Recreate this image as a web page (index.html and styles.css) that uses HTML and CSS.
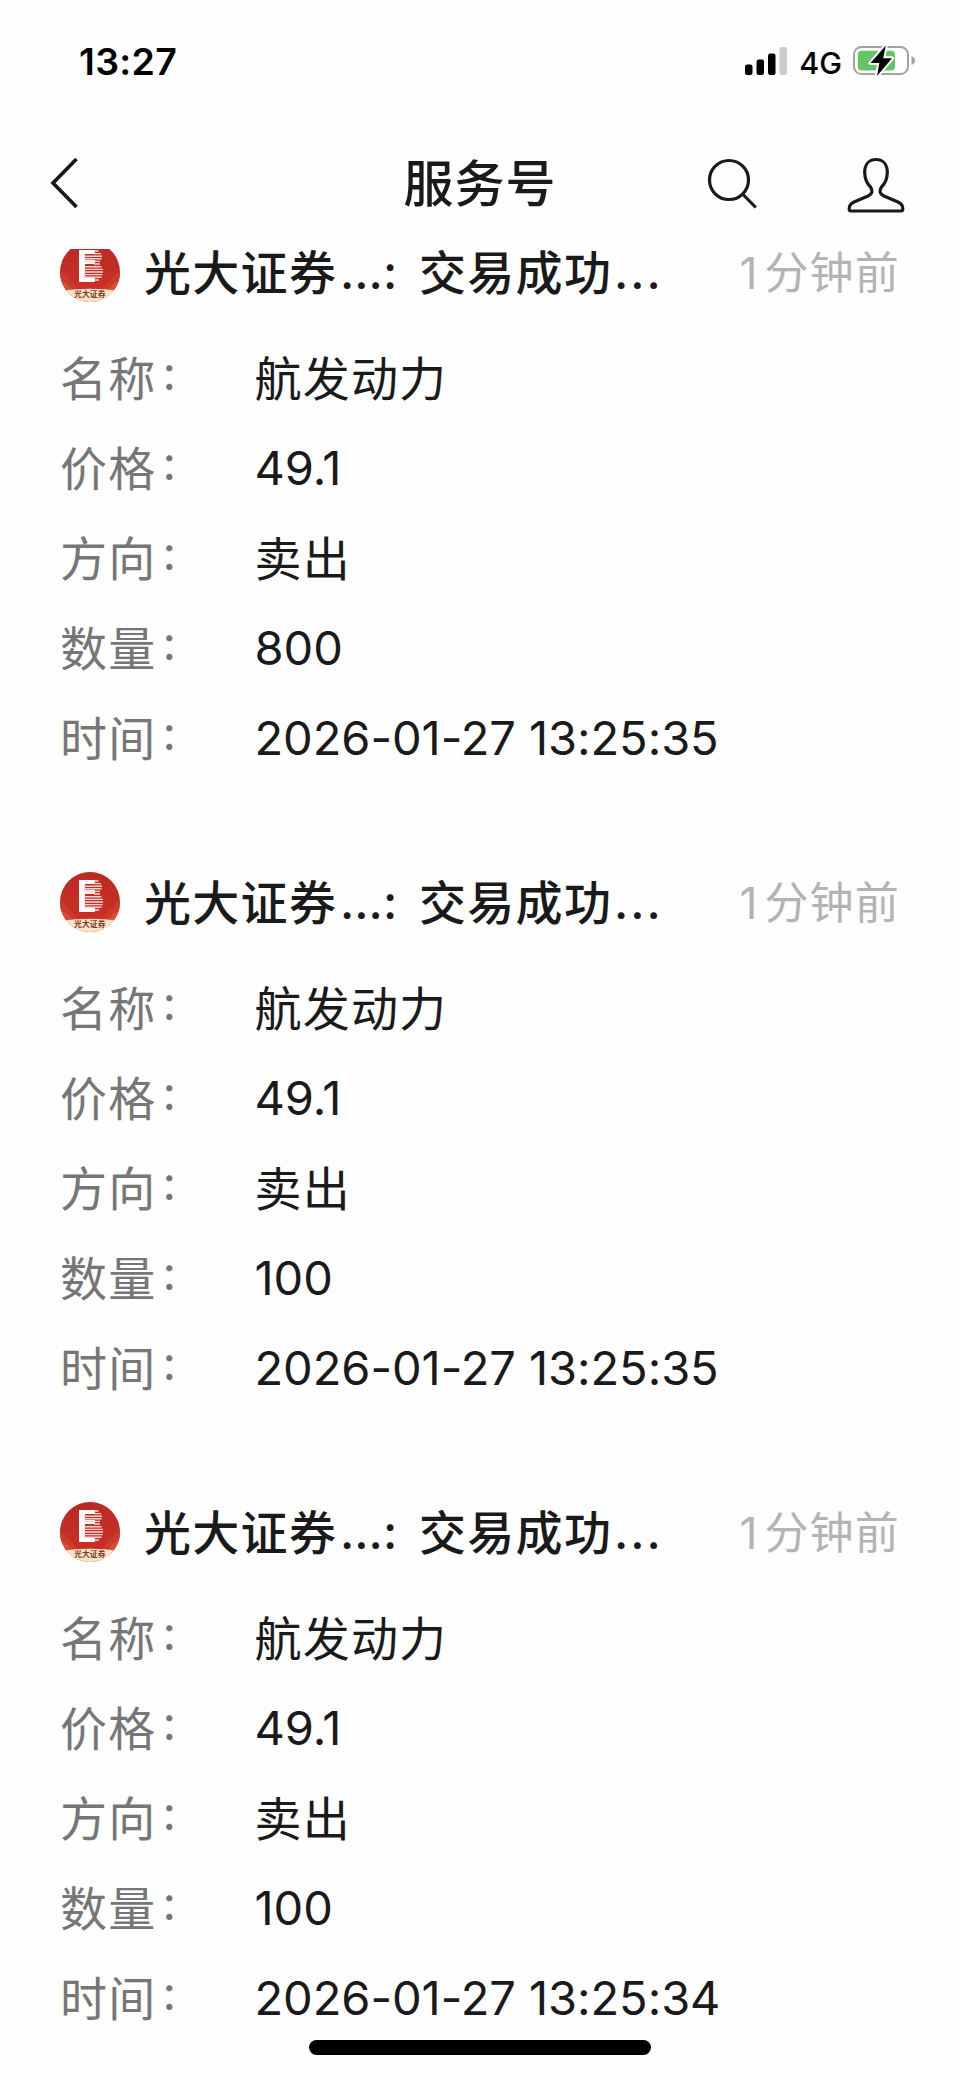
FILE: index.html
```html
<!DOCTYPE html>
<html lang="zh-CN">
<head>
<meta charset="utf-8">
<title>服务号</title>
<link rel="stylesheet" href="styles.css">
</head>
<body>
<svg class="defs" width="0" height="0" aria-hidden="true">
  <defs>
    <linearGradient id="red" x1="0" y1="0" x2="0" y2="1"><stop offset="0" stop-color="#b92a22"/><stop offset=".75" stop-color="#cb2f27"/></linearGradient>
    <clipPath id="disc"><circle cx="30" cy="30" r="30"/></clipPath>
    <symbol id="logo" viewBox="0 0 60 60">
      <g clip-path="url(#disc)">
        <rect width="60" height="60" fill="url(#red)"/>
        <path d="M0 29Q10 35 18 48H6L0 40ZM60 29Q50 35 42 48H54L60 40Z" fill="#cb3a2a"/>
        <path d="M0 38Q8 41 12 48H0ZM60 38Q52 41 48 48H60Z" fill="#d4502e"/>
        <path d="M0 49Q30 44.500 60 49V60H0Z" fill="#fae3c6"/>
        <path d="M19 8H35V12H25V18H35V22H25V35H35V40H19Z" fill="#fff"/>
        <path d="M34 9H38.500M34 11.600H41M24 14.200H42M24 16.800H41.500M24 19.400H40M34 22H40M24 24.800H41.500M24 27.400H43M24 30H43M24 32.600H42.500M24 35.200H41.500M34 38H39" fill="none" stroke="#f6d5d1" stroke-width="1.400"/>
      </g>
    </symbol>
  </defs>
</svg>
<div class="screen">
  <div class="status">
    <span class="clock">13:27</span>
    <div class="status-right">
      <svg width="42" height="30" viewBox="0 0 42 30"><rect x="0" y="18.500" width="7.500" height="10.500" rx="2.200"/><rect x="11.500" y="13.500" width="7.500" height="15.500" rx="2.200"/><rect x="23" y="7.500" width="7.500" height="21.500" rx="2.200"/><rect x="34.500" y="1" width="7.500" height="28" rx="2.200" fill="#ccc"/></svg>
      <span class="net">4G</span>
      <svg width="63" height="32" viewBox="0 0 63 32"><rect x="1" y="1.900" width="54" height="27.200" rx="7.500" fill="none" stroke="#a3a3a3" stroke-width="2"/><rect x="4.800" y="5.800" width="37.200" height="19.800" rx="4" fill="#65c466"/><path d="M58.500 11Q62 12.500 62 15.500T58.500 20Z" fill="#a3a3a3"/><path d="M32.800.5L17.500 18H26.300L24 31L39 13.200H30.200Z" stroke="#fff" stroke-width="4" stroke-linejoin="round"/><path d="M32.800.5L17.500 18H26.300L24 31L39 13.200H30.200Z"/></svg>
    </div>
  </div>
  <div class="nav">
    <svg class="back" width="30" height="54" viewBox="0 0 30 54"><path d="M27.500 3L4 27L27.500 51" fill="none" stroke="#1a1a1a" stroke-width="3.700"/></svg>
    <h1 class="nav-title">服务号</h1>
    <div class="nav-actions">
      <svg width="52" height="54" viewBox="0 0 52 54"><circle cx="22" cy="24" r="19.500" fill="none" stroke="#1a1a1a" stroke-width="3.200"/><path d="M35.500 38L48.800 51.500" stroke="#1a1a1a" stroke-width="3.200"/></svg>
      <svg width="60" height="58" viewBox="0 0 60 58"><path d="M30 3.500C22.500 3.500 18.700 9 18.700 16.500C18.700 23 20.500 27 24.500 31C27.200 35 26.200 38 22.500 39.800L7.500 46.300C4.300 47.800 3.200 50 3.200 53Q3.200 55 5 55H55Q56.800 55 56.800 53C56.800 50 55.700 47.800 52.500 46.300L37.500 39.800C33.800 38 32.800 35 35.500 31C39.500 27 41.300 23 41.300 16.500C41.300 9 37.500 3.500 30 3.500Z" fill="none" stroke="#1a1a1a" stroke-width="3.200"/></svg>
    </div>
  </div>
  <main class="feed">
    <article class="card">
      <header class="card-head"><span class="avatar"><svg width="60" height="60"><use href="#logo"/></svg><span class="avatar-text">光大证券</span></span><span class="name">光大证券</span><span class="dots">...</span><span class="sep">:</span><span class="subject">交易成功</span><span class="dots wide">...</span><time class="ago"><span class="num">1</span>分钟前</time></header>
      <dl class="rows">
        <dt>名称<i>:</i></dt><dd>航发动力</dd>
        <dt>价格<i>:</i></dt><dd class="num">49.1</dd>
        <dt>方向<i>:</i></dt><dd>卖出</dd>
        <dt>数量<i>:</i></dt><dd class="num">800</dd>
        <dt>时间<i>:</i></dt><dd class="num">2026-01-27 13:25:35</dd>
      </dl>
    </article>
    <article class="card">
      <header class="card-head"><span class="avatar"><svg width="60" height="60"><use href="#logo"/></svg><span class="avatar-text">光大证券</span></span><span class="name">光大证券</span><span class="dots">...</span><span class="sep">:</span><span class="subject">交易成功</span><span class="dots wide">...</span><time class="ago"><span class="num">1</span>分钟前</time></header>
      <dl class="rows">
        <dt>名称<i>:</i></dt><dd>航发动力</dd>
        <dt>价格<i>:</i></dt><dd class="num">49.1</dd>
        <dt>方向<i>:</i></dt><dd>卖出</dd>
        <dt>数量<i>:</i></dt><dd class="num">100</dd>
        <dt>时间<i>:</i></dt><dd class="num">2026-01-27 13:25:35</dd>
      </dl>
    </article>
    <article class="card">
      <header class="card-head"><span class="avatar"><svg width="60" height="60"><use href="#logo"/></svg><span class="avatar-text">光大证券</span></span><span class="name">光大证券</span><span class="dots">...</span><span class="sep">:</span><span class="subject">交易成功</span><span class="dots wide">...</span><time class="ago"><span class="num">1</span>分钟前</time></header>
      <dl class="rows">
        <dt>名称<i>:</i></dt><dd>航发动力</dd>
        <dt>价格<i>:</i></dt><dd class="num">49.1</dd>
        <dt>方向<i>:</i></dt><dd>卖出</dd>
        <dt>数量<i>:</i></dt><dd class="num">100</dd>
        <dt>时间<i>:</i></dt><dd class="num">2026-01-27 13:25:34</dd>
      </dl>
    </article>
  </main>
  <div class="home-indicator"></div>
</div>
</body>
</html>
```

FILE: styles.css
```css
* { box-sizing: border-box; }
body { margin: 0; background: #fefefe; color: #1a1a1a; font-family: "Noto Sans CJK SC", sans-serif; }
.defs { position: absolute; }
.screen { position: relative; width: 960px; height: 2079px; overflow: hidden; display: flex; flex-direction: column; }

.status { height: 124px; flex: none; display: flex; justify-content: space-between; padding: 0 44px 0 79px; color: #000; font-family: Inter, sans-serif; }
.clock { font-size: 37.5px; font-weight: 600; line-height: 123px; letter-spacing: .3px; white-space: nowrap; }
.status-right { display: flex; align-items: center; height: 122px; }
.net { font-size: 30.5px; font-weight: 500; margin: 2px 11px 0 12px; letter-spacing: 0; }

.nav { height: 125px; flex: none; display: grid; grid-template-columns: 1fr auto 1fr; align-items: start; padding: 0 54px 0 49px; }
.back { margin-top: 32px; }
.nav-title { margin: 0; font-size: 50px; font-weight: 500; line-height: 113px; letter-spacing: 1px; padding-left: 5px; }
.nav-actions { display: flex; justify-content: flex-end; gap: 87px; padding-top: 32px; }

.feed { flex: 1; min-height: 0; overflow: hidden; padding: 0 60px; }
.card { height: 630px; }
.card:first-child { margin-top: -22px; }
.card-head { display: flex; align-items: center; height: 90px; font-size: 47px; font-weight: 500; line-height: 86px; letter-spacing: 1.3px; white-space: nowrap; }
.card-head > span:not(.avatar), .ago { height: 90px; }
.avatar { position: relative; width: 60px; height: 60px; flex: none; margin-right: 24px; }
.avatar svg { display: block; }
.avatar-text { position: absolute; left: 14px; top: 47px; width: 40px; font-size: 7.800px; line-height: 9px; letter-spacing: .1px; color: #7a3a2c; font-weight: 700; }
.name { width: 196px; }
.dots { width: 43px; font-family: Inter, sans-serif; letter-spacing: 0; line-height: 90px; }
.sep { width: 36px; font-family: Inter, sans-serif; line-height: 90px; }
.subject { width: 195px; }
.dots.wide { letter-spacing: 2px; }
.ago { margin-left: auto; color: #b3b3b3; font-size: 44px; font-weight: 400; letter-spacing: 1.2px; }
.ago .num { margin-right: 7px; }

.rows { display: grid; grid-template-columns: 194.500px 1fr; grid-auto-rows: 90px; margin: 16px 0 0; font-size: 47px; line-height: 85px; letter-spacing: 1.2px; }
.rows dt { color: #767676; }
.rows dt i { display: inline-block; font-style: normal; font-family: Inter, sans-serif; margin-left: 6px; line-height: 1; transform: translateY(-6px); }
.rows dd { margin: 0; white-space: nowrap; }
.num { font-family: Inter, "Noto Sans CJK SC", sans-serif; letter-spacing: -.05px; }
.rows .num { line-height: 90px; }

.home-indicator { position: absolute; left: 309px; top: 2040px; width: 342px; height: 15px; border-radius: 8px; background: #000; }
```
